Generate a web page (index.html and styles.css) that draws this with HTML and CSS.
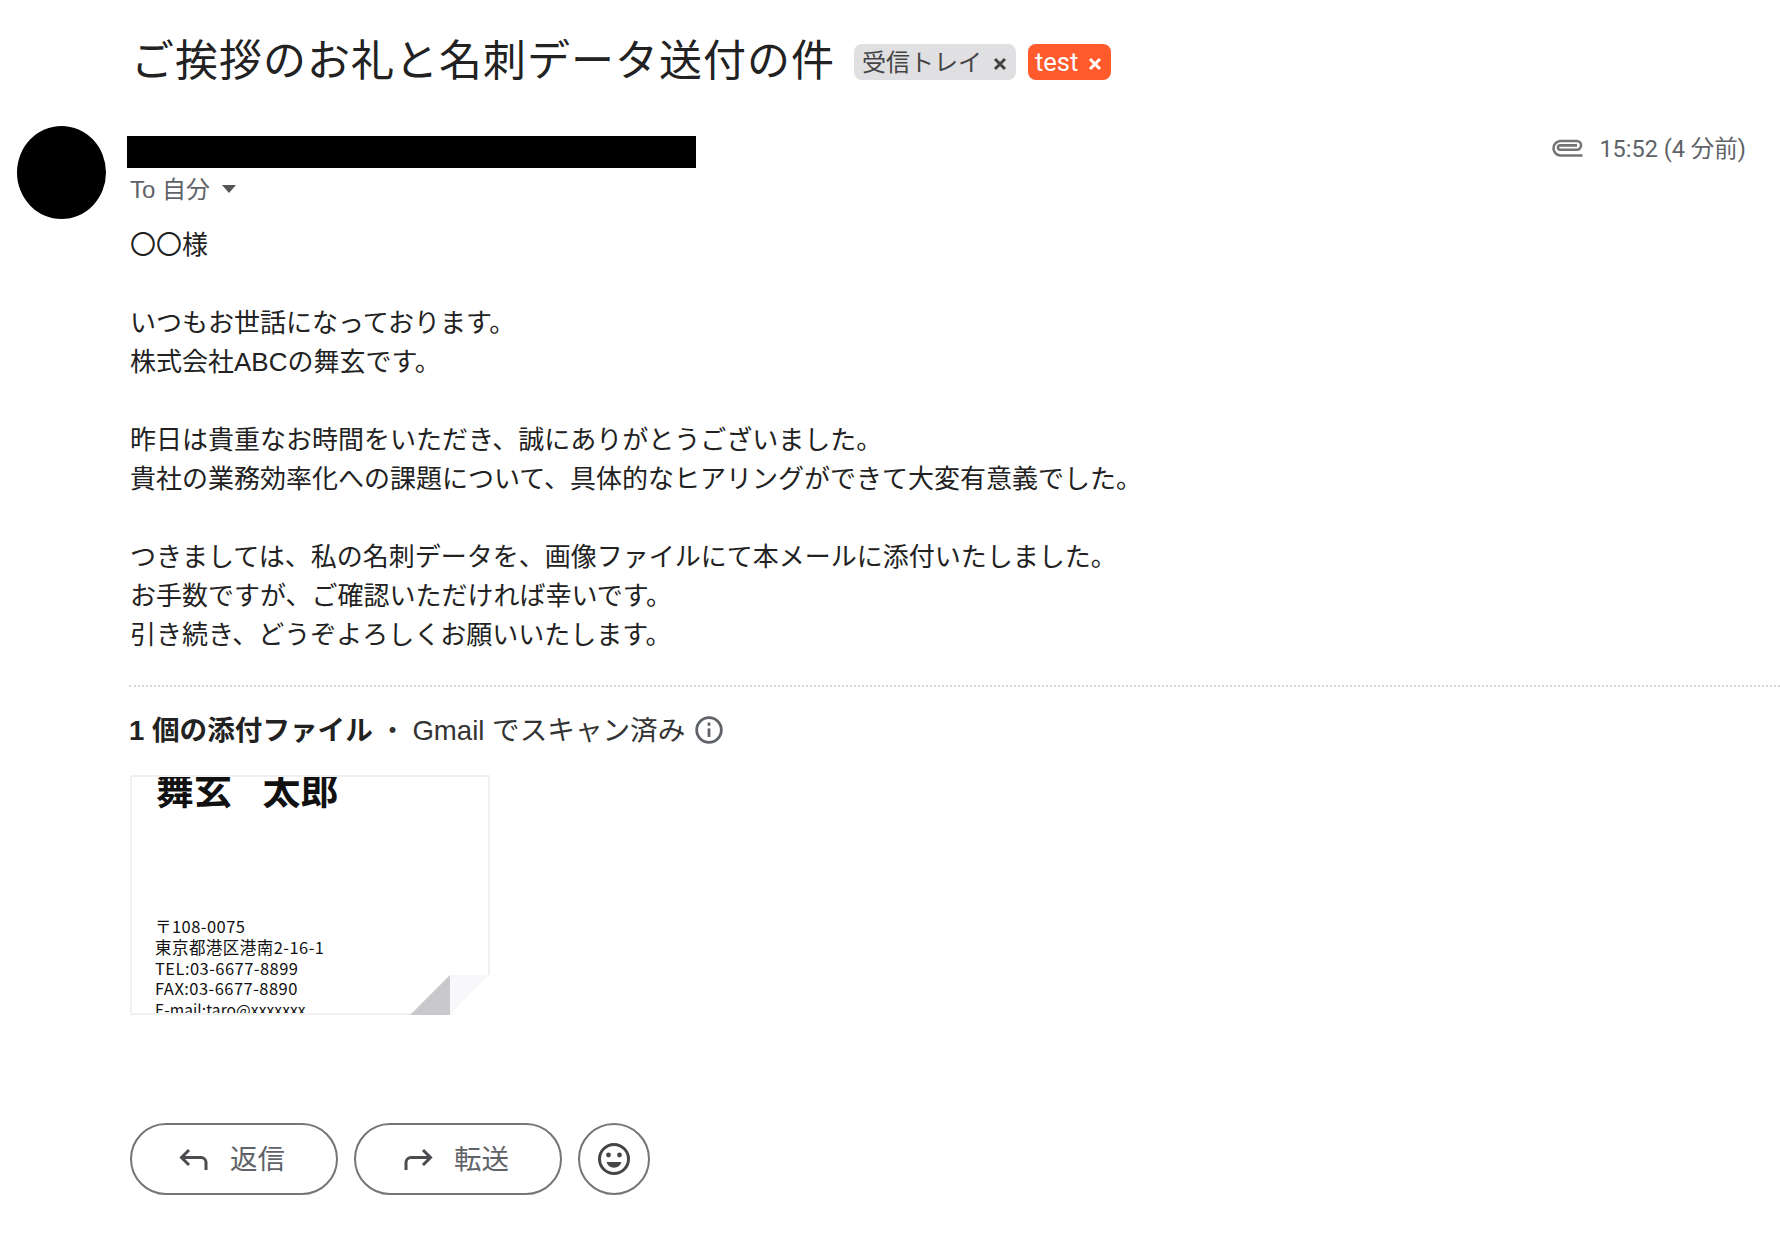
FILE: index.html
```html
<!DOCTYPE html>
<html lang="ja">
<head>
    <meta charset="UTF-8">
    <title>ご挨拶のお礼と名刺データ送付の件</title>
    <link rel="stylesheet" href="styles.css">
</head>
<body>
    <div class="subject-row">
        <h1 class="subject">ご挨拶のお礼と名刺データ送付の件</h1>
        <span class="tag tag-inbox"><span class="tag-label">受信トレイ</span>
            <svg class="tag-x" width="14" height="14" viewBox="0 0 14 14" stroke="#444" stroke-width="3"><path d="M2 2 12 12M12 2 2 12"/></svg>
        </span>
        <span class="tag tag-test">test
            <svg class="tag-x" width="14" height="14" viewBox="0 0 14 14" stroke="#fff" stroke-width="3"><path d="M2 2 12 12M12 2 2 12"/></svg>
        </span>
    </div>

    <div class="message">
        <div class="avatar"></div>
        <div class="message-main">
            <div class="head">
                <div class="sender">
                    <div class="redacted"></div>
                    <div class="to">To 自分<span class="caret"></span></div>
                </div>
                <div class="meta">
                    <svg class="clip" width="36" height="22" viewBox="0 0 32 20" fill="none" stroke="#757575" stroke-width="2.3">
                        <path d="M31 16H10.5a6.7 6.7 0 0 1 0-13.3H25.7a4 4 0 0 1 0 8H10.7a2 2 0 0 1 0-4H26"/>
                    </svg>
                    <span class="time">15:52 (4 分前)</span>
                </div>
            </div>

            <div class="body-text">
                <p>〇〇様</p>
                <p>いつもお世話になっております。<br>株式会社ABCの舞玄です。</p>
                <p>昨日は貴重なお時間をいただき、誠にありがとうございました。<br>貴社の業務効率化への課題について、具体的なヒアリングができて大変有意義でした。</p>
                <p>つきましては、私の名刺データを、画像ファイルにて本メールに添付いたしました。<br>お手数ですが、ご確認いただければ幸いです。<br>引き続き、どうぞよろしくお願いいたします。</p>
            </div>

            <div class="attachments">
                <div class="attach-title">
                    <b>1 個の添付ファイル</b><span class="dot">・</span><span class="scan">Gmail でスキャン済み</span>
                    <svg class="info" width="30" height="30" viewBox="0 0 28 28" fill="none" stroke="#5f6368" stroke-width="2.6">
                        <circle cx="14" cy="14" r="11.5"/>
                        <path d="M14 12.5v8"/>
                        <path d="M14 7v3"/>
                    </svg>
                </div>
                <div class="card-wrap">
                    <div class="card">
                        <div class="card-name">舞玄 太郎</div>
                        <div class="card-info">
                            <div>〒108-0075</div>
                            <div>東京都港区港南2-16-1</div>
                            <div>TEL:03-6677-8899</div>
                            <div>FAX:03-6677-8890</div>
                            <div class="card-mail">E-mail:taro@xxxxxxx</div>
                        </div>
                    </div>
                    <svg class="curl" width="80" height="42" viewBox="0 0 80 42">
                        <rect x="40" width="40" height="42" fill="#fff"/>
                        <path d="M0 40 40 0V40Z" fill="#c9c8cb"/>
                        <path d="M40 0H78L40 40Z" fill="#f8f7f9"/>
                    </svg>
                </div>
            </div>

            <div class="actions">
                <div class="btn">
                    <svg width="32" height="28" viewBox="0 0 32 28" fill="none" stroke="#4a4c4f" stroke-width="3">
                        <path d="M11 5 3.5 12.5 11 20"/>
                        <path d="M4 12.5H23a5 5 0 0 1 5 5V25"/>
                    </svg>
                    <span class="btn-label">返信</span>
                </div>
                <div class="btn">
                    <svg width="32" height="28" viewBox="0 0 32 28" fill="none" stroke="#4a4c4f" stroke-width="3">
                        <path d="M21 5 28.5 12.5 21 20"/>
                        <path d="M28 12.5H9a5 5 0 0 0-5 5V25"/>
                    </svg>
                    <span class="btn-label">転送</span>
                </div>
                <div class="btn-round">
                    <svg width="34" height="34" viewBox="0 0 34 34" fill="none" stroke="#444746" stroke-width="3">
                        <circle cx="17" cy="17" r="14.5"/>
                        <circle cx="11.5" cy="13" r="2.4" fill="#444746" stroke="none"/>
                        <circle cx="22.5" cy="13" r="2.4" fill="#444746" stroke="none"/>
                        <path d="M9.5 20h15a7.8 7.8 0 0 1-15 0Z" fill="#444746" stroke="none"/>
                    </svg>
                </div>
            </div>
        </div>
    </div>
</body>
</html>
```

FILE: styles.css
```css
* {
    box-sizing: border-box;
}
body {
    margin: 0;
    height: 1234px;
    overflow: hidden;
    background: #fff;
    color: #202124;
    font-family: "Liberation Sans", "Noto Sans CJK JP", sans-serif;
}
.subject-row {
    display: flex;
    align-items: center;
    gap: 12px;
    padding: 24px 0 0 131px;
    height: 100px;
}
.subject {
    margin: 0 7px 0 0;
    font-size: 43px;
    font-weight: 400;
    letter-spacing: 1px;
    line-height: 46px;
    margin-top: -2px;
    color: #222;
}
.tag {
    display: flex;
    align-items: center;
    height: 36px;
    padding: 0 9px 0 8px;
    border-radius: 8px;
    font-size: 24px;
    color: #444;
    background: #e0dfe2;
}
.tag-label {
    margin-top: -4px;
}
.tag-inbox {
    width: 162px;
}
.tag-test {
    width: 83px;
    padding-left: 7px;
    background: #ff5a2c;
    color: #fff;
    font-size: 25.5px;
    font-family: Roboto, sans-serif;
}
.tag-x {
    margin-left: auto;
    margin-top: 3px;
}
.message {
    display: flex;
    padding: 26px 0 0 17px;
}
.avatar {
    flex: none;
    width: 89px;
    height: 93px;
    border-radius: 50%;
    background: #000;
    margin-right: 23px;
}
.message-main {
    flex: 1;
    min-width: 0;
    padding-top: 10px;
}
.head {
    display: flex;
    justify-content: space-between;
    height: 90px;
}
.redacted {
    width: 569px;
    height: 32px;
    margin-left: -2px;
    background: #000;
}
.to {
    display: flex;
    align-items: center;
    margin-top: 2px;
    padding-left: 1px;
    font-size: 24px;
    color: #5f6368;
}
.caret {
    margin-left: 12px;
    margin-top: 3px;
    border-top: 8px solid #555;
    border-left: 7.5px solid transparent;
    border-right: 7.5px solid transparent;
}
.meta {
    display: flex;
    align-items: center;
    gap: 15px;
    height: 24px;
    margin-top: -1px;
    padding-right: 34px;
    font-family: Roboto, "Noto Sans CJK JP", sans-serif;
    font-size: 23.5px;
    color: #5f6368;
}
.clip {
    margin-top: 3px;
}
.time {
    margin-top: -1px;
}
.body-text {
    padding-left: 1px;
    font-size: 26px;
    line-height: 39px;
    color: #222;
}
.body-text p {
    margin: 0 0 39px;
}
.attachments {
    border-top: 2px dotted #d8d8d8;
    margin-top: -9px;
}
.attach-title {
    display: flex;
    align-items: center;
    height: 40px;
    margin-top: 21px;
    font-size: 27.6px;
    color: #333;
}
.attach-title b {
    color: #222;
}
.dot {
    margin: 0 6px;
}
.info {
    margin: 3px 0 0 9px;
}
.card-wrap {
    position: relative;
    width: 360px;
    height: 240px;
    margin: 27px 0 0 1px;
}
.card {
    height: 100%;
    overflow: hidden;
    border: 2px solid #f1f0f3;
    color: #111;
}
.card-name {
    margin: -6px 0 0 24px;
    font-size: 38px;
    word-spacing: 20px;
    line-height: 40px;
    font-weight: bold;
}
.card-info {
    margin: 105px 0 0 23px;
    font-family: "Noto Sans CJK JP", sans-serif;
    font-size: 16.5px;
    line-height: 20.8px;
    letter-spacing: 0.45px;
}
.card-mail {
    font-size: 15.5px;
    letter-spacing: 0.1px;
}
.curl {
    position: absolute;
    right: 0;
    bottom: -2px;
}
.actions {
    display: flex;
    gap: 16px;
    margin: 108px 0 0 1px;
}
.btn {
    display: flex;
    align-items: center;
    justify-content: center;
    gap: 20px;
    width: 208px;
    height: 72px;
    padding-right: 5px;
    border: 2px solid #747578;
    border-radius: 36px;
    font-size: 27.5px;
    color: #5f6368;
}
.btn-label {
    margin-top: -5px;
}
.btn-round {
    display: flex;
    align-items: center;
    justify-content: center;
    width: 72px;
    height: 72px;
    border: 2px solid #747578;
    border-radius: 50%;
}
```
